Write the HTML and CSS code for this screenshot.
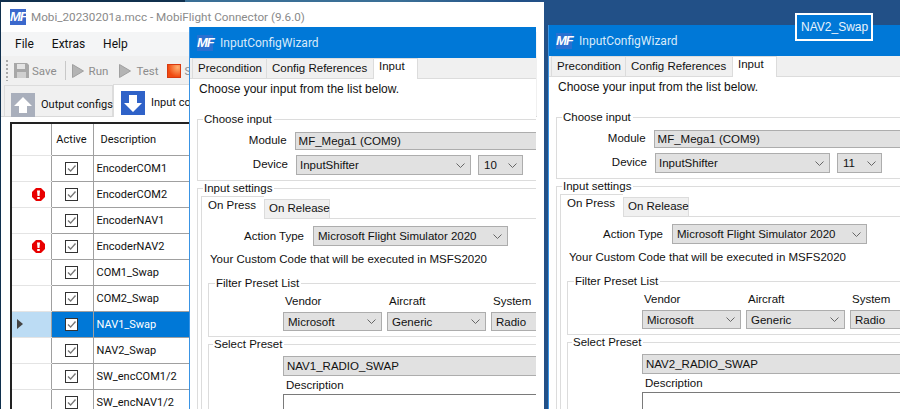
FILE: index.html
```html
<!DOCTYPE html>
<html lang="en">
<head>
<meta charset="UTF-8">
<meta name="viewport" content="width=device-width, initial-scale=1.0">
<title>MobiFlight Connector</title>
<link rel="stylesheet" href="styles.css">
</head>
<body>

<svg class="defs" width="0" height="0">
    <symbol id="chev" viewBox="0 0 9 5"><path d="M.5.5l4 4 4-4" fill="none" stroke="#666"/></symbol>
    <symbol id="check" viewBox="0 0 13 13"><path d="M3 6.5l2.6 2.6L10.5 3.5" fill="none" stroke="#777" stroke-width="1.4"/></symbol>
    <symbol id="err" viewBox="0 0 13 13"><path d="M4 0h5l4 4v5l-4 4H4L0 9V4z" fill="#e80000"/><path d="M5 2.5h3L7.5 8h-2z" fill="#fff"/><rect x="5.2" y="9" width="2.6" height="2" fill="#fff"/></symbol>
    <symbol id="play" viewBox="0 0 12 14"><path d="M.5.5L11.5 7 .5 13.5z" fill="#b4b4b4" stroke="#a0a0a0"/></symbol>
    <symbol id="arrow-up" viewBox="0 0 24 24"><path d="M12 4L3 13h5v7h8v-7h5z" fill="#fff"/></symbol>
    <symbol id="arrow-down" viewBox="0 0 24 24"><path d="M12 21L3 12h5V4h8v8h5z" fill="#fff"/></symbol>
</svg>

<div class="desktop">

    <!-- main window -->
    <div class="window main-window">
        <div class="titlebar-main">
            <span class="logo">MF</span>
            <span class="title-text">Mobi_20230201a.mcc - MobiFlight Connector (9.6.0)</span>
        </div>
        <div class="menubar">
            <span>File</span>
            <span>Extras</span>
            <span>Help</span>
        </div>
        <div class="toolbar">
            <span class="grip"></span>
            <svg class="floppy" width="15" height="15" viewBox="0 0 15 15"><path d="M0 0h13l2 2v13H0z" fill="#a8a8a8"/><rect x="3" y="1" width="8" height="5" fill="#e4e4e4"/><rect x="3" y="9" width="9" height="6" fill="#d0d0d0"/></svg>
            <span class="tool-label save-label">Save</span>
            <span class="tool-sep"></span>
            <svg class="tool-play" width="12" height="14"><use href="#play"/></svg>
            <span class="tool-label run-label">Run</span>
            <svg class="tool-play test-play" width="12" height="14"><use href="#play"/></svg>
            <span class="tool-label test-label">Test</span>
            <span class="stop-icon"></span>
            <span class="tool-label stop-label">S</span>
        </div>
        <div class="main-tabs">
            <div class="main-tab">
                <span class="tab-icon tab-icon-gray"><svg width="24" height="24"><use href="#arrow-up"/></svg></span>
                <span>Output configs</span>
            </div>
            <div class="main-tab main-tab-active">
                <span class="tab-icon tab-icon-blue"><svg width="24" height="24"><use href="#arrow-down"/></svg></span>
                <span>Input co</span>
            </div>
        </div>
        <table class="grid">
            <thead>
                <tr><th class="col-head"></th><th class="col-active">Active</th><th class="col-desc">Description</th></tr>
            </thead>
            <tbody>
                <tr><td class="col-head"></td><td class="col-active"><span class="cb"><svg width="13" height="13"><use href="#check"/></svg></span></td><td class="col-desc">EncoderCOM1</td></tr>
                <tr><td class="col-head"><svg class="err" width="13" height="13"><use href="#err"/></svg></td><td class="col-active"><span class="cb"><svg width="13" height="13"><use href="#check"/></svg></span></td><td class="col-desc">EncoderCOM2</td></tr>
                <tr><td class="col-head"></td><td class="col-active"><span class="cb"><svg width="13" height="13"><use href="#check"/></svg></span></td><td class="col-desc">EncoderNAV1</td></tr>
                <tr><td class="col-head"><svg class="err" width="13" height="13"><use href="#err"/></svg></td><td class="col-active"><span class="cb"><svg width="13" height="13"><use href="#check"/></svg></span></td><td class="col-desc">EncoderNAV2</td></tr>
                <tr><td class="col-head"></td><td class="col-active"><span class="cb"><svg width="13" height="13"><use href="#check"/></svg></span></td><td class="col-desc">COM1_Swap</td></tr>
                <tr><td class="col-head"></td><td class="col-active"><span class="cb"><svg width="13" height="13"><use href="#check"/></svg></span></td><td class="col-desc">COM2_Swap</td></tr>
                <tr class="selected"><td class="col-head"><span class="row-arrow"></span></td><td class="col-active"><span class="cb"><svg width="13" height="13"><use href="#check"/></svg></span></td><td class="col-desc">NAV1_Swap</td></tr>
                <tr><td class="col-head"></td><td class="col-active"><span class="cb"><svg width="13" height="13"><use href="#check"/></svg></span></td><td class="col-desc">NAV2_Swap</td></tr>
                <tr><td class="col-head"></td><td class="col-active"><span class="cb"><svg width="13" height="13"><use href="#check"/></svg></span></td><td class="col-desc">SW_encCOM1/2</td></tr>
                <tr><td class="col-head"></td><td class="col-active"><span class="cb"><svg width="13" height="13"><use href="#check"/></svg></span></td><td class="col-desc">SW_encNAV1/2</td></tr>
            </tbody>
        </table>
    </div>

    <!-- wizard, NAV1 -->
    <div class="window wizard wizard-one">
        <div class="wiz-title"><span class="logo logo-wiz">MF</span><span>InputConfigWizard</span></div>
        <div class="wiz-tabs">
            <span class="wiz-tab tab-pre">Precondition</span>
            <span class="wiz-tab tab-ref">Config References</span>
            <span class="wiz-tab wiz-tab-active">Input</span>
        </div>
        <div class="wiz-body">
            <p class="intro">Choose your input from the list below.</p>
            <fieldset class="group group-choose">
                <legend>Choose input</legend>
                <div class="form-row row-module">
                    <label>Module</label>
                    <div class="combo combo-wide">MF_Mega1 (COM9)</div>
                </div>
                <div class="form-row row-device">
                    <label>Device</label>
                    <div class="combo combo-device">InputShifter<svg width="9" height="5"><use href="#chev"/></svg></div>
                    <div class="combo combo-num">10<svg width="9" height="5"><use href="#chev"/></svg></div>
                </div>
            </fieldset>
            <fieldset class="group group-settings">
                <legend>Input settings</legend>
                <div class="press-tabs">
                    <span class="press-tab press-tab-active">On Press</span>
                    <span class="press-tab">On Release</span>
                </div>
                <div class="press-panel">
                    <div class="action-row">
                        <label>Action Type</label>
                        <div class="combo combo-action">Microsoft Flight Simulator 2020<svg width="9" height="5"><use href="#chev"/></svg></div>
                    </div>
                    <p class="custom-code">Your Custom Code that will be executed in MSFS2020</p>
                    <fieldset class="group group-filter">
                        <legend>Filter Preset List</legend>
                        <div class="filter-grid">
                            <span>Vendor</span><span>Aircraft</span><span>System</span>
                            <div class="combo">Microsoft<svg width="9" height="5"><use href="#chev"/></svg></div>
                            <div class="combo">Generic<svg width="9" height="5"><use href="#chev"/></svg></div>
                            <div class="combo">Radio<svg width="9" height="5"><use href="#chev"/></svg></div>
                        </div>
                    </fieldset>
                    <fieldset class="group group-preset">
                        <legend>Select Preset</legend>
                        <div class="combo combo-preset">NAV1_RADIO_SWAP</div>
                        <div class="desc-label">Description</div>
                        <div class="desc-box"></div>
                    </fieldset>
                </div>
            </fieldset>
        </div>
    </div>

    <!-- wizard, NAV2 -->
    <div class="window wizard wizard-two">
        <div class="wiz-title"><span class="logo logo-wiz">MF</span><span>InputConfigWizard</span></div>
        <div class="wiz-tabs">
            <span class="wiz-tab tab-pre">Precondition</span>
            <span class="wiz-tab tab-ref">Config References</span>
            <span class="wiz-tab wiz-tab-active">Input</span>
        </div>
        <div class="wiz-body">
            <p class="intro">Choose your input from the list below.</p>
            <fieldset class="group group-choose">
                <legend>Choose input</legend>
                <div class="form-row row-module">
                    <label>Module</label>
                    <div class="combo combo-wide">MF_Mega1 (COM9)</div>
                </div>
                <div class="form-row row-device">
                    <label>Device</label>
                    <div class="combo combo-device">InputShifter<svg width="9" height="5"><use href="#chev"/></svg></div>
                    <div class="combo combo-num">11<svg width="9" height="5"><use href="#chev"/></svg></div>
                </div>
            </fieldset>
            <fieldset class="group group-settings">
                <legend>Input settings</legend>
                <div class="press-tabs">
                    <span class="press-tab press-tab-active">On Press</span>
                    <span class="press-tab">On Release</span>
                </div>
                <div class="press-panel">
                    <div class="action-row">
                        <label>Action Type</label>
                        <div class="combo combo-action">Microsoft Flight Simulator 2020<svg width="9" height="5"><use href="#chev"/></svg></div>
                    </div>
                    <p class="custom-code">Your Custom Code that will be executed in MSFS2020</p>
                    <fieldset class="group group-filter">
                        <legend>Filter Preset List</legend>
                        <div class="filter-grid">
                            <span>Vendor</span><span>Aircraft</span><span>System</span>
                            <div class="combo">Microsoft<svg width="9" height="5"><use href="#chev"/></svg></div>
                            <div class="combo">Generic<svg width="9" height="5"><use href="#chev"/></svg></div>
                            <div class="combo">Radio<svg width="9" height="5"><use href="#chev"/></svg></div>
                        </div>
                    </fieldset>
                    <fieldset class="group group-preset">
                        <legend>Select Preset</legend>
                        <div class="combo combo-preset">NAV2_RADIO_SWAP</div>
                        <div class="desc-label">Description</div>
                        <div class="desc-box"></div>
                    </fieldset>
                </div>
            </fieldset>
        </div>
    </div>

    <div class="drag-label">NAV2_Swap</div>
</div>

</body>
</html>
```

FILE: styles.css
```css
* {
    box-sizing: border-box;
}
body {
    margin: 0;
    font-family: "Liberation Sans", Arial, sans-serif;
    font-size: 12px;
    color: #111;
}
.defs {
    position: absolute;
}
.desktop {
    position: relative;
    width: 900px;
    height: 409px;
    overflow: hidden;
    background: linear-gradient(to right, #10304e 185px, #3a6f96 185px, #3a6f96 400px, #225087 520px);
}
.window {
    position: absolute;
    overflow: hidden;
    background: #fff;
}

/* main window */
.main-window {
    left: 1px;
    top: 2px;
    width: 543px;
    height: 407px;
    padding-right: 7px;
    font-family: Roboto, sans-serif;
    font-size: 11px;
}
.desktop::before {
    content: "";
    position: absolute;
    left: 544px;
    top: 0;
    right: 0;
    bottom: 0;
    background: #225087;
}
.desktop::after {
    content: "";
    position: absolute;
    left: 0;
    top: 0;
    width: 1px;
    bottom: 0;
    background: #10304e;
}
.titlebar-main {
    display: flex;
    align-items: center;
    height: 30px;
    padding-left: 9px;
    white-space: nowrap;
}
.title-text {
    margin-left: 5px;
    font-size: 11.7px;
    color: #8a8a8a;
}
.logo {
    display: block;
    width: 16px;
    height: 16px;
    background: #3b68cc;
    color: #fff;
    font: italic bold 13px/16px "Liberation Sans", sans-serif;
    letter-spacing: -1px;
    text-align: center;
}
.menubar {
    display: flex;
    height: 24px;
    align-items: center;
    padding-left: 14px;
    gap: 18px;
    background: #f4f5f6;
    font-size: 12px;
}
.toolbar {
    display: flex;
    align-items: center;
    height: 29px;
    padding-left: 5px;
    background: #f0f0f0;
    white-space: nowrap;
    font-size: 11.5px;
}
.grip {
    width: 2px;
    height: 21px;
    background: repeating-linear-gradient(to bottom, #aaa 0 2px, transparent 2px 4px);
}
.floppy {
    margin-left: 6px;
}
.tool-label {
    color: #8d8d8d;
}
.save-label {
    margin-left: 3px;
}
.tool-sep {
    width: 1px;
    height: 19px;
    margin: 0 6px 0 8px;
    background: #c8c8c8;
}
.run-label {
    margin-left: 5px;
}
.test-play {
    margin-left: 11px;
}
.test-label {
    margin-left: 5px;
}
.stop-icon {
    width: 14px;
    height: 14px;
    margin-left: 8px;
    border: 1px solid #d83a10;
    background: radial-gradient(circle at 80% 20%, #ffb070, #f04a10 70%);
}
.stop-label {
    margin-left: 4px;
}
.main-tabs {
    display: flex;
    height: 32px;
    padding-left: 3px;
    background: #f0f0f0;
    border-bottom: 1px solid #d9d9d9;
}
.main-tab {
    display: flex;
    align-items: center;
    gap: 6px;
    width: 109px;
    height: 31px;
    padding: 7px 0 0 6px;
    border: 1px solid #dcdcdc;
    border-bottom: none;
    white-space: nowrap;
}
.main-tab-active {
    width: 200px;
    height: 33px;
    margin-top: -1px;
    padding: 3px 0 0 7px;
    background: #fff;
}
.tab-icon {
    display: block;
    width: 24px;
    height: 24px;
}
.tab-icon-gray {
    background: #a9afbc;
}
.tab-icon-blue {
    background: #2f62c8;
}

/* config grid */
.grid {
    margin: 5px 0 0 9px;
    width: 300px;
    table-layout: fixed;
    border-collapse: collapse;
    border-top: 2px solid #222;
    border-left: 2px solid #222;
    font-size: 11px;
}
.grid th {
    height: 32px;
    font-weight: normal;
    text-align: left;
    border-right: 1px solid #a0a0a0;
    border-bottom: 1px solid #a0a0a0;
    padding: 0 0 0 7px;
}
.grid td {
    height: 26px;
    padding: 1px 0 0 3px;
    border-right: 1px solid #a0a0a0;
    border-bottom: 1px solid #a0a0a0;
    white-space: nowrap;
}
.grid .col-head {
    width: 40px;
    padding: 0;
    border-bottom-color: #e4e4e4;
    text-align: right;
}
.grid .col-active {
    width: 42px;
    padding: 0 1px 0 0;
    text-align: center;
}
.err {
    display: block;
    margin: 1px 6px 0 auto;
}
.cb {
    display: block;
    width: 13px;
    height: 13px;
    margin: 0 auto;
    border: 1px solid #333;
    background: #fff;
}
.cb svg {
    display: block;
    margin: -1px;
}
.selected .col-head {
    background: #bcdcf4;
}
.selected .col-active,
.selected .col-desc {
    background: #0078d7;
    color: #fff;
}
.row-arrow {
    display: block;
    width: 0;
    height: 0;
    margin-left: 5px;
    border-left: 6px solid #444;
    border-top: 5px solid transparent;
    border-bottom: 5px solid transparent;
}

/* wizard dialogs */
.wizard {
    height: 390px;
    border-left: 1px solid #3a94e4;
    font-size: 11.5px;
}
.wizard-one {
    left: 189px;
    top: 27px;
    width: 347px;
}
.wizard-two {
    left: 548px;
    top: 25px;
    width: 352px;
}
.wiz-title {
    display: flex;
    align-items: center;
    gap: 7px;
    height: 31px;
    padding-left: 7px;
    background: #0078d7;
    color: #d8eafa;
    font-family: Roboto, sans-serif;
    font-size: 12px;
}
.logo-wiz {
    background: #2a70d0;
}
.wiz-tabs {
    display: flex;
    align-items: flex-end;
    height: 21px;
    padding-left: 2px;
    background: #f0f0f0;
    border-bottom: 1px solid #dcdcdc;
}
.wiz-tab {
    height: 20px;
    padding: 3px 0 0 5px;
    border-top: 1px solid #dcdcdc;
    border-left: 1px solid #dcdcdc;
    white-space: nowrap;
}
.tab-pre {
    width: 74px;
}
.tab-ref {
    width: 107px;
}
.wiz-tab-active {
    width: 45px;
    height: 21px;
    padding-top: 1px;
    margin-bottom: -1px;
    border-right: 1px solid #dcdcdc;
    background: #fff;
}
.wiz-body {
    width: 460px;
    padding-left: 7px;
}
.intro {
    height: 33px;
    margin: 0 0 0 2px;
    padding-top: 3px;
    font-size: 12px;
}
.group {
    margin: 0;
    padding: 0;
    border: 1px solid #dcdcdc;
    min-width: 0;
}
.group legend {
    padding: 0 2px 0 1px;
    margin-left: 5px;
    height: 14px;
    line-height: 14px;
}
.group-choose {
    height: 69px;
}
.form-row {
    display: flex;
    align-items: center;
}
.form-row label {
    width: 90px;
    margin-right: 8px;
    padding-bottom: 2px;
    text-align: right;
}
.row-module {
    margin-top: 6px;
}
.row-device {
    margin-top: 5px;
}
.combo {
    display: flex;
    align-items: center;
    justify-content: space-between;
    height: 19px;
    padding: 0 5px 0 4px;
    background: #e1e1e1;
    border: 1px solid #adadad;
    white-space: nowrap;
    overflow: hidden;
}
.combo-wide {
    width: 360px;
    height: 18px;
    padding-left: 3px;
}
.combo-device {
    width: 175px;
    height: 20px;
    padding-left: 3px;
}
.combo-num {
    width: 45px;
    height: 20px;
    margin-left: 7px;
    padding-left: 5px;
}
.group-settings {
    height: 300px;
}
.press-tabs {
    display: flex;
    align-items: flex-end;
    height: 23px;
    margin-left: 3px;
    margin-top: 0;
}
.press-tab {
    width: 66px;
    height: 19px;
    padding: 2px 0 0 4px;
    background: #f0f0f0;
    border: 1px solid #dcdcdc;
    border-bottom: none;
    white-space: nowrap;
}
.press-tab-active {
    width: 63px;
    height: 23px;
    padding: 2px 0 0 6px;
    background: #fff;
    border-right: none;
    position: relative;
    z-index: 1;
    margin-bottom: -1px;
}
.press-panel {
    margin-left: 3px;
    height: 280px;
    border-left: 1px solid #dcdcdc;
    border-top: 1px solid #dcdcdc;
    padding: 7px 0 0 2px;
}
.action-row {
    display: flex;
    align-items: center;
}
.action-row label {
    width: 100px;
    margin-right: 9px;
    text-align: right;
}
.combo-action {
    width: 195px;
    height: 20px;
}
.custom-code {
    height: 16px;
    margin: 5px 0 9px 6px;
    line-height: 16px;
}
.group-filter {
    margin-left: 4px;
    height: 61px;
}
.group-filter legend {
    margin-left: 6px;
}
.filter-grid {
    display: grid;
    grid-template-columns: 99px 99px 100px;
    column-gap: 5px;
    margin: 5px 0 0 74px;
}
.filter-grid span {
    height: 17px;
    padding-left: 2px;
}
.group-preset {
    margin-left: 4px;
    height: 100px;
}
.group-preset legend {
    margin-left: 4px;
}
.combo-preset {
    width: 360px;
    height: 20px;
    margin: 5px 0 0 74px;
    padding-left: 3px;
}
.desc-label {
    height: 18px;
    margin-left: 77px;
    padding-top: 3px;
}
.desc-box {
    width: 360px;
    height: 60px;
    margin-left: 74px;
    border: 1px solid #7a7a7a;
}

.drag-label {
    position: absolute;
    left: 795px;
    top: 13px;
    width: 78px;
    height: 28px;
    padding-left: 4px;
    border: 2px solid #fff;
    background: #0078d7;
    color: #e8f3fc;
    line-height: 25px;
    white-space: nowrap;
}
```
